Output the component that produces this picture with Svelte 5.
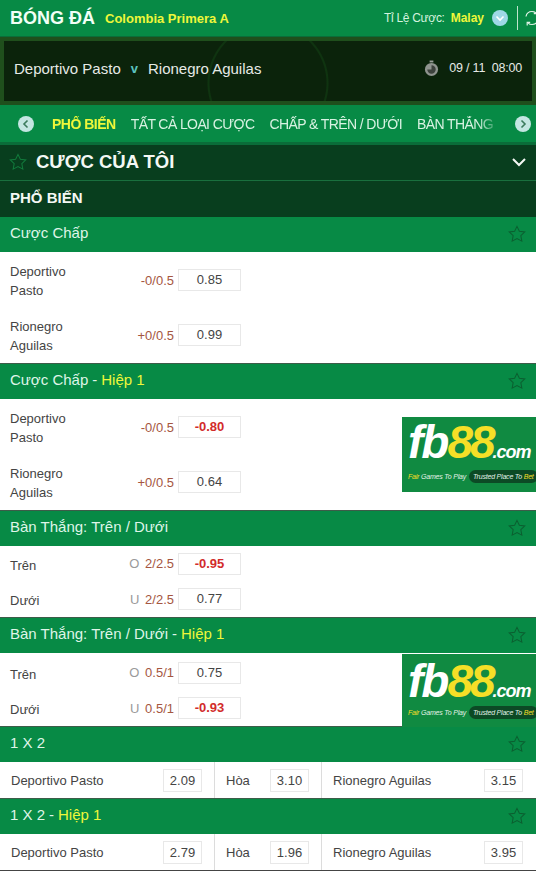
<script>
  const sections = [
    {
      title: 'Cược Chấp',
      rows: [
        { name: 'Deportivo Pasto', line: '-0/0.5', odds: '0.85' },
        { name: 'Rionegro Aguilas', line: '+0/0.5', odds: '0.99' }
      ]
    },
    {
      title: 'Cược Chấp',
      half: true,
      rows: [
        { name: 'Deportivo Pasto', line: '-0/0.5', odds: '-0.80' },
        { name: 'Rionegro Aguilas', line: '+0/0.5', odds: '0.64' }
      ]
    },
    {
      title: 'Bàn Thắng: Trên / Dưới',
      compact: true,
      rows: [
        { name: 'Trên', side: 'O', line: '2/2.5', odds: '-0.95' },
        { name: 'Dưới', side: 'U', line: '2/2.5', odds: '0.77' }
      ]
    },
    {
      title: 'Bàn Thắng: Trên / Dưới',
      half: true,
      compact: true,
      tall: true,
      rows: [
        { name: 'Trên', side: 'O', line: '0.5/1', odds: '0.75' },
        { name: 'Dưới', side: 'U', line: '0.5/1', odds: '-0.93' }
      ]
    },
    { title: '1 X 2', triple: ['2.09', '3.10', '3.15'] },
    { title: '1 X 2', half: true, triple: ['2.79', '1.96', '3.95'] }
  ];

  const tabs = ['PHỔ BIẾN', 'TẤT CẢ LOẠI CƯỢC', 'CHẤP & TRÊN / DƯỚI', 'BÀN THẮNG'];
  const starPath = 'M8 1.2l2.1 4.4 4.8.6-3.5 3.3.9 4.8L8 12l-4.3 2.3.9-4.8L1.1 6.2l4.8-.6z';
</script>

{#snippet star(cls)}
  <svg class={cls} viewBox="0 0 16 16" aria-hidden="true"><path d={starPath} /></svg>
{/snippet}

{#snippet logo(cls)}
  <div class="ad {cls}">
    <div class="ad-mark"><span class="ad-fb">fb</span><span class="ad-88">88</span><span class="ad-com">.com</span></div>
    <div class="ad-tag">
      <span><b>Fair</b> Games To Play</span>
      <span class="ad-trust">Trusted Place To <b>Bet</b></span>
    </div>
  </div>
{/snippet}

<div class="page">
  <header class="top">
    <span class="sport">BÓNG ĐÁ</span>
    <span class="league">Colombia Primera A</span>
    <span class="odds-type">Tỉ Lệ Cược:</span>
    <span class="malay">Malay</span>
    <span class="round light">
      <svg viewBox="0 0 16 16"><path d="M4.5 6.5L8 10l3.5-3.5" /></svg>
    </span>
    <span class="sep"></span>
    <svg class="refresh" viewBox="0 0 16 20">
      <path d="M2 8.5C2.6 5 5.5 3.5 8 3.5c1.7 0 3 .6 4 1.7M14 11.5c-.6 3.5-3.5 5-6 5-1.7 0-3-.6-4-1.7" />
      <path d="M12.8 2.5v3.2H9.8M3.2 17.5v-3.2h3" />
    </svg>
  </header>

  <section class="match">
    <span class="team">Deportivo Pasto</span>
    <span class="vs">v</span>
    <span class="team">Rionegro Aguilas</span>
    <svg class="clock" viewBox="0 0 16 18">
      <rect x="6" y="0.5" width="4" height="2" fill="#9a9f9a" />
      <circle cx="8" cy="10" r="7" fill="#8f948f" />
      <path d="M8 10V5.5A4.5 4.5 0 1 1 3.5 10z" fill="#3d423d" />
    </svg>
    <span class="time">09 / 11 &nbsp;08:00</span>
  </section>

  <nav class="tabs">
    <span class="round pale">
      <svg viewBox="0 0 16 16"><path d="M9.5 4.5L6 8l3.5 3.5" /></svg>
    </span>
    <div class="tab-list">
      {#each tabs as tab, i}
        <span class="tab" class:on={i === 0}>{tab}</span>
      {/each}
    </div>
    <span class="round pale">
      <svg viewBox="0 0 16 16"><path d="M6.5 4.5L10 8l-3.5 3.5" /></svg>
    </span>
  </nav>

  <div class="mybets">
    {@render star('star-dark')}
    <span class="mybets-title">CƯỢC CỦA TÔI</span>
    <svg class="chev" viewBox="0 0 16 10"><path d="M2 2l6 6 6-6" /></svg>
  </div>
  <div class="popular">PHỔ BIẾN</div>

  {#each sections as s, i}
    <div class="head" class:first={i === 0}>
      <span>{s.title}{#if s.half}<span class="dash">-</span><span class="half">Hiệp 1</span>{/if}</span>
      {@render star('star-head')}
    </div>
    {#if s.triple}
      <div class="triple">
        <div class="cell first-cell"><span>Deportivo Pasto</span><span class="odds">{s.triple[0]}</span></div>
        <div class="cell mid"><span>Hòa</span><span class="odds">{s.triple[1]}</span></div>
        <div class="cell last"><span>Rionegro Aguilas</span><span class="odds">{s.triple[2]}</span></div>
      </div>
    {:else}
      <div class="rows" class:compact={s.compact} class:tall={s.tall}>
        {#each s.rows as r}
          <div class="row">
            <span class="name">{r.name}</span>
            <span class="line">
              {#if r.side}<span class="side">{r.side}</span>{/if}
              {r.line}
            </span>
            <span class="odds" class:neg={r.odds.startsWith('-')}>{r.odds}</span>
          </div>
        {/each}
      </div>
    {/if}
  {/each}
  <div class="end"></div>

  {@render logo('ad-one')}
  {@render logo('ad-two')}
</div>

<style>
  :global(body) {
    margin: 0;
    background: #fff;
  }

  .page {
    position: relative;
    width: 536px;
    height: 871px;
    overflow: hidden;
    font-family: "Liberation Sans", Arial, sans-serif;
    color: #333;
    background: #fff;
  }

  .top {
    display: flex;
    align-items: center;
    box-sizing: border-box;
    height: 37px;
    padding-left: 10px;
    background: #078a45;
    border-bottom: 1px solid #0a6d39;
  }

  .sport {
    font-size: 18px;
    font-weight: bold;
    color: #f2fff6;
  }

  .league {
    margin-left: 10px;
    font-size: 13px;
    font-weight: bold;
    color: #eef73a;
  }

  .odds-type {
    margin-left: auto;
    font-size: 12px;
    letter-spacing: -0.3px;
    color: #d4f3df;
  }

  .malay {
    margin-left: 6px;
    font-size: 12px;
    font-weight: bold;
    color: #eef73a;
  }

  .round {
    display: block;
    flex: none;
    width: 16px;
    height: 16px;
    border-radius: 50%;
  }

  .round svg {
    display: block;
    fill: none;
    stroke-width: 1.6;
  }

  .round.light {
    margin-left: 8px;
    background: #9ed8e6;
  }

  .round.light svg {
    stroke: #fff;
  }

  .round.pale {
    background: #c4e6e2;
  }

  .round.pale svg {
    stroke: #3b7a5c;
  }

  .sep {
    flex: none;
    width: 1px;
    height: 24px;
    margin-left: 9px;
    background: #bfe3cc;
  }

  .refresh {
    flex: none;
    width: 16px;
    height: 20px;
    margin: 0 -4px 0 6px;
    fill: none;
    stroke: #dff3e6;
    stroke-width: 1.2;
  }

  .match {
    display: flex;
    align-items: center;
    box-sizing: border-box;
    height: 68px;
    padding: 0 10px 6px;
    border: 4px solid #1f4f1c;
    background:
      radial-gradient(circle at 264px 42px, transparent 58px, #0f3410 59px, #0f3410 60px, transparent 61px),
      #0b230b;
  }

  .team {
    font-size: 15px;
    color: #e6eae6;
  }

  .vs {
    margin: 0 10px;
    font-size: 13px;
    font-weight: bold;
    color: #5cc3c0;
  }

  .clock {
    width: 15px;
    height: 17px;
    margin-left: auto;
  }

  .time {
    margin-left: 10px;
    font-size: 12.5px;
    letter-spacing: -0.2px;
    color: #e6eae6;
  }

  .tabs {
    display: flex;
    align-items: center;
    gap: 10px;
    height: 37px;
    padding: 0 5px 0 18px;
    background: #078a45;
    border-bottom: 3px solid #0a6d39;
  }

  .tab-list {
    display: flex;
    flex: 1;
    gap: 15px;
    min-width: 0;
    padding-left: 8px;
    white-space: nowrap;
    overflow: hidden;
    -webkit-mask-image: linear-gradient(90deg, #000 94%, transparent 99%);
    mask-image: linear-gradient(90deg, #000 94%, transparent 99%);
  }

  .tab {
    font-size: 14px;
    letter-spacing: -0.6px;
    color: #d8f2e2;
  }

  .tab.on {
    font-weight: bold;
    letter-spacing: -0.5px;
    color: #eef73a;
  }

  .mybets {
    display: flex;
    align-items: center;
    box-sizing: border-box;
    height: 36px;
    padding: 0 9px 2px;
    background: #083e1e;
    border-bottom: 1px solid #19703e;
  }

  .star-dark {
    width: 18px;
    height: 18px;
    fill: none;
    stroke: #127a3c;
    stroke-width: 0.9;
  }

  .mybets-title {
    margin-left: 9px;
    font-size: 18.5px;
    font-weight: bold;
    color: #f4f8f4;
  }

  .chev {
    width: 16px;
    height: 10px;
    margin-left: auto;
    fill: none;
    stroke: #f4f8f4;
    stroke-width: 2;
  }

  .popular {
    height: 35px;
    padding-left: 10px;
    font-size: 15px;
    font-weight: bold;
    line-height: 34px;
    color: #f4f8f4;
    background: #083e1e;
  }

  .head {
    display: flex;
    align-items: center;
    justify-content: space-between;
    box-sizing: border-box;
    height: 36px;
    padding: 0 10px 5px;
    font-size: 15px;
    color: #dff5e8;
    background: #078a45;
    border-top: 1px solid #3d5c49;
  }

  .head.first {
    border-top-color: #083e1e;
  }

  .dash {
    margin: 0 4px;
  }

  .half {
    color: #eef73a;
  }

  .star-head {
    width: 18px;
    height: 18px;
    margin-top: 3px;
    fill: none;
    stroke: #0b5f30;
    stroke-width: 0.9;
  }

  .rows {
    padding-top: 1px;
    background: #fff;
  }

  .row {
    display: flex;
    align-items: center;
    height: 55px;
    padding-left: 10px;
    font-size: 13px;
    color: #444;
  }

  .row .odds {
    margin-bottom: 2px;
  }

  .rows.compact {
    padding-top: 0;
  }

  .rows.compact .row {
    height: 35.5px;
  }

  .rows.compact .odds {
    margin-bottom: 0;
  }

  .rows.compact .name {
    padding-top: 3px;
  }

  .rows.tall {
    padding-top: 2px;
  }

  .name {
    width: 70px;
    line-height: 19px;
  }

  .line {
    width: 98px;
    padding-right: 4px;
    box-sizing: border-box;
    text-align: right;
    color: #a5563f;
  }

  .side {
    margin-right: 2px;
    color: #9a9a9a;
  }

  .odds {
    display: block;
    box-sizing: border-box;
    width: 63px;
    height: 22px;
    font-size: 13px;
    line-height: 20px;
    text-align: center;
    color: #444;
    background: #fff;
    border: 1px solid #e8e8e8;
  }

  .odds.neg {
    font-weight: bold;
    color: #d22b2b;
  }

  .triple {
    display: flex;
    height: 36px;
    font-size: 13px;
    color: #444;
    background: #fff;
  }

  .triple .odds {
    width: 39px;
    height: 23px;
    line-height: 21px;
  }

  .cell {
    display: flex;
    align-items: center;
    justify-content: space-between;
    box-sizing: border-box;
    border-right: 1px solid #dcdcdc;
  }

  .cell.first-cell {
    width: 215px;
    padding: 0 12px 0 11px;
  }

  .cell.mid {
    width: 107px;
    padding: 0 12px 0 11px;
  }

  .cell.last {
    flex: 1;
    padding: 0 13px 0 11px;
    border-right: 0;
  }

  .end {
    height: 1px;
    background: #444;
  }

  .ad {
    position: absolute;
    left: 402px;
    width: 134px;
    box-sizing: border-box;
    padding-left: 6px;
    background: #108a41;
    overflow: hidden;
    font-style: italic;
  }

  .ad-one {
    top: 417px;
    height: 75px;
    padding-top: 2px;
  }

  .ad-two {
    top: 654px;
    height: 73px;
    padding-top: 4px;
  }

  .ad-mark {
    display: flex;
    align-items: baseline;
    height: 46px;
    font-weight: bold;
    line-height: 46px;
    white-space: nowrap;
  }

  .ad-fb {
    font-size: 46px;
    letter-spacing: -2px;
    color: #fff;
  }

  .ad-88 {
    font-size: 46px;
    letter-spacing: -3px;
    color: #f5df27;
  }

  .ad-com {
    font-size: 18px;
    letter-spacing: -1px;
    color: #fff;
  }

  .ad-tag {
    display: flex;
    align-items: center;
    margin-top: 5px;
    font-size: 7px;
    letter-spacing: -0.2px;
    white-space: nowrap;
    color: #e3f3e8;
  }

  .ad-two .ad-tag {
    margin-top: 2px;
  }

  .ad-tag b {
    font-weight: normal;
    color: #f5df27;
  }

  .ad-trust {
    margin-left: 3px;
    padding: 3px 4px;
    border-radius: 7px;
    background: #0c4a25;
  }
</style>
